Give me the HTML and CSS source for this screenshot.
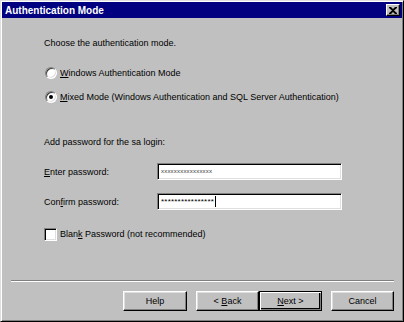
FILE: index.html
```html
<!doctype html>
<html lang="en">
<head>
    <meta charset="UTF-8">
    <title>Authentication Mode</title>
    <link rel="stylesheet" href="styles.css">
</head>
<body>
    <div class="window">
        <div class="title-bar">
            <span class="title">Authentication Mode</span>
            <span class="close-btn">
                <svg width="8" height="7" viewBox="0 0 8 7"><path d="M0 0h2l2 2 2-2h2v1l-3 2.5 3 2.5v1h-2l-2-2-2 2h-2v-1l3-2.5-3-2.5z" fill="#000"/></svg>
            </span>
        </div>

        <div class="content">
            <div class="intro">Choose the authentication mode.</div>

            <div class="radio-row first">
                <span class="radio"></span>
                <span><u>W</u>indows Authentication Mode</span>
            </div>
            <div class="radio-row">
                <span class="radio checked"></span>
                <span><u>M</u>ixed Mode (Windows Authentication and SQL Server Authentication)</span>
            </div>

            <div class="section-label">Add password for the sa login:</div>

            <div class="field-row first">
                <label><u>E</u>nter password:</label>
                <div class="field">xxxxxxxxxxxxxxxx</div>
            </div>
            <div class="field-row">
                <label>Con<u>f</u>irm password:</label>
                <div class="field stars">****************<span class="caret"></span></div>
            </div>

            <div class="check-row">
                <span class="checkbox"></span>
                <span>Blan<u>k</u> Password (not recommended)</span>
            </div>
        </div>

        <div class="footer">
            <div class="separator"></div>
            <div class="buttons">
                <button class="btn help">Help</button>
                <div class="nav-pair">
                    <button class="btn">&lt; <u>B</u>ack</button>
                    <button class="btn default"><u>N</u>ext &gt;</button>
                </div>
                <button class="btn">Cancel</button>
            </div>
        </div>
    </div>
</body>
</html>
```

FILE: styles.css
```css
body {
    margin: 0;
    padding: 0;
    background: #c0c0c0;
    font-family: "Liberation Sans", Arial, sans-serif;
    font-size: 9px;
    color: #000;
}

u {
    text-decoration: underline;
    text-underline-offset: 1px;
}

.window {
    width: 404px;
    height: 322px;
    box-sizing: border-box;
    display: flex;
    flex-direction: column;
    background: #c0c0c0;
    border: 1px solid;
    border-color: #dfdfdf #000 #000 #dfdfdf;
    box-shadow: inset 1px 1px #fff, inset -1px -1px #808080;
    padding: 1px;
}

.title-bar {
    height: 16px;
    background: #000080;
    display: flex;
    align-items: center;
    justify-content: space-between;
    padding: 0 2px 0 3px;
    flex-shrink: 0;
}

.title {
    color: #fff;
    font-weight: bold;
    font-size: 10px;
}

.close-btn {
    width: 14px;
    height: 12px;
    box-sizing: border-box;
    background: #c0c0c0;
    border: 1px solid;
    border-color: #fff #000 #000 #fff;
    box-shadow: inset -1px -1px #808080;
    display: flex;
    align-items: center;
    justify-content: center;
}

.content {
    padding: 18px 0 0 42px;
    line-height: 14px;
}

/* radio buttons */
.radio-row,
.check-row {
    display: flex;
    align-items: center;
    gap: 3px;
    height: 14px;
}

.radio-row.first {
    margin-top: 16px;
}

.radio-row + .radio-row {
    margin-top: 10px;
}

.radio {
    width: 12px;
    height: 12px;
    box-sizing: border-box;
    border-radius: 50%;
    background: #fff;
    border: 1px solid;
    border-color: #808080 #fff #fff #808080;
    box-shadow: inset 1px 1px #404040, inset -1px -1px #dfdfdf;
    display: flex;
    align-items: center;
    justify-content: center;
    margin-left: 1px;
}

.radio.checked::after {
    content: "";
    width: 4px;
    height: 4px;
    border-radius: 50%;
    background: #000;
}

.section-label {
    margin-top: 31px;
}

/* password fields */
.field-row {
    display: flex;
    align-items: center;
    height: 17px;
}

.field-row.first {
    margin-top: 14px;
}

.field-row + .field-row {
    margin-top: 13px;
}

.field-row label {
    width: 113px;
}

.field {
    width: 185px;
    height: 17px;
    box-sizing: border-box;
    background: #fff;
    border: 1px solid;
    border-color: #808080 #fff #fff #808080;
    box-shadow: inset 1px 1px #000, inset -1px -1px #dfdfdf;
    padding: 0 3px;
    font-size: 6px;
    line-height: 15px;
    letter-spacing: 0.2px;
    display: flex;
    align-items: center;
    color: #333;
}

.field.stars {
    color: #000;
    letter-spacing: 0.2px;
    font-size: 8px;
}

.caret {
    width: 1px;
    height: 11px;
    background: #000;
    margin-left: 1px;
}

.check-row {
    margin-top: 17px;
}

.checkbox {
    width: 13px;
    height: 13px;
    box-sizing: border-box;
    background: #fff;
    border: 1px solid;
    border-color: #808080 #fff #fff #808080;
    box-shadow: inset 1px 1px #000, inset -1px -1px #dfdfdf;
}

/* footer */
.footer {
    margin-top: auto;
    padding: 0 8px 9px 8px;
}

.separator {
    border-top: 1px solid #808080;
    border-bottom: 1px solid #fff;
    height: 0;
    margin-left: 1px;
}

.buttons {
    display: flex;
    justify-content: flex-end;
    gap: 9px;
    margin-top: 9px;
}

.nav-pair {
    display: flex;
}

.btn {
    width: 63px;
    height: 20px;
    box-sizing: border-box;
    background: #c0c0c0;
    font-family: "Liberation Sans", Arial, sans-serif;
    font-size: 9px;
    color: #000;
    padding: 0;
    border: 1px solid;
    border-color: #fff #000 #000 #fff;
    box-shadow: inset -1px -1px #808080, inset 1px 1px #dfdfdf;
}

.btn.help {
    width: 64px;
}

.btn.default {
    border: 1px solid #000;
    box-shadow: inset 1px 1px #fff, inset -1px -1px #808080, inset -2px -2px #000;
}
```
